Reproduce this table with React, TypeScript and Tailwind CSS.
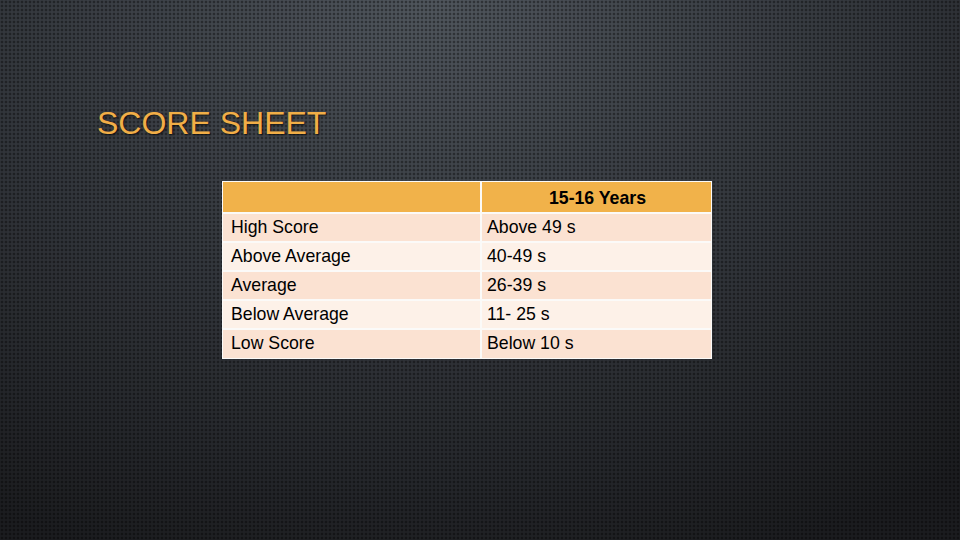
const rows = [
  { label: 'High Score', value: 'Above 49 s' },
  { label: 'Above Average', value: '40-49 s' },
  { label: 'Average', value: '26-39 s' },
  { label: 'Below Average', value: '11- 25 s' },
  { label: 'Low Score', value: 'Below 10 s' },
];

export default function App() {
  return (
    <div className="w-[960px] h-[540px] overflow-hidden font-['Liberation_Sans',Arial,sans-serif] bg-[radial-gradient(circle,rgba(0,0,0,0.38)_1.1px,transparent_1.7px),radial-gradient(ellipse_90%_110%_at_45%_0%,#50565d_0%,#363a40_45%,#1b1c1f_100%)] [background-size:4px_4px,100%_100%]">
      <div className="pt-[107px] pl-[97px]">
        {/* Title */}
        <h1 className="text-[32px] leading-none text-[#f1ae47] [text-shadow:1px_1px_2px_rgba(0,0,0,0.7)]">
          SCORE SHEET
        </h1>

        {/* Score table */}
        <div className="mt-[42px] ml-[125px] w-[490px] bg-[#fbfaf8] p-[1px] grid grid-cols-[257px_229px] gap-[2px] text-[17.7px] leading-none text-black">
          <div className="h-[30px] bg-[#f1b24a]" />
          <div className="h-[30px] bg-[#f1b24a] flex items-center justify-center pt-[3px] pl-[2px] font-bold">
            15-16 Years
          </div>
          {rows.map((r, i) => {
            const bg = i % 2 === 0 ? 'bg-[#fbe2d2]' : 'bg-[#fdf1e8]';
            const h = i === rows.length - 1 ? 'h-[28px]' : 'h-[27px]';
            return (
              <div key={r.label} className="contents">
                <div className={`${h} ${bg} flex items-center pl-[8px]`}>{r.label}</div>
                <div className={`${h} ${bg} flex items-center pl-[5px]`}>{r.value}</div>
              </div>
            );
          })}
        </div>
      </div>
    </div>
  );
}
